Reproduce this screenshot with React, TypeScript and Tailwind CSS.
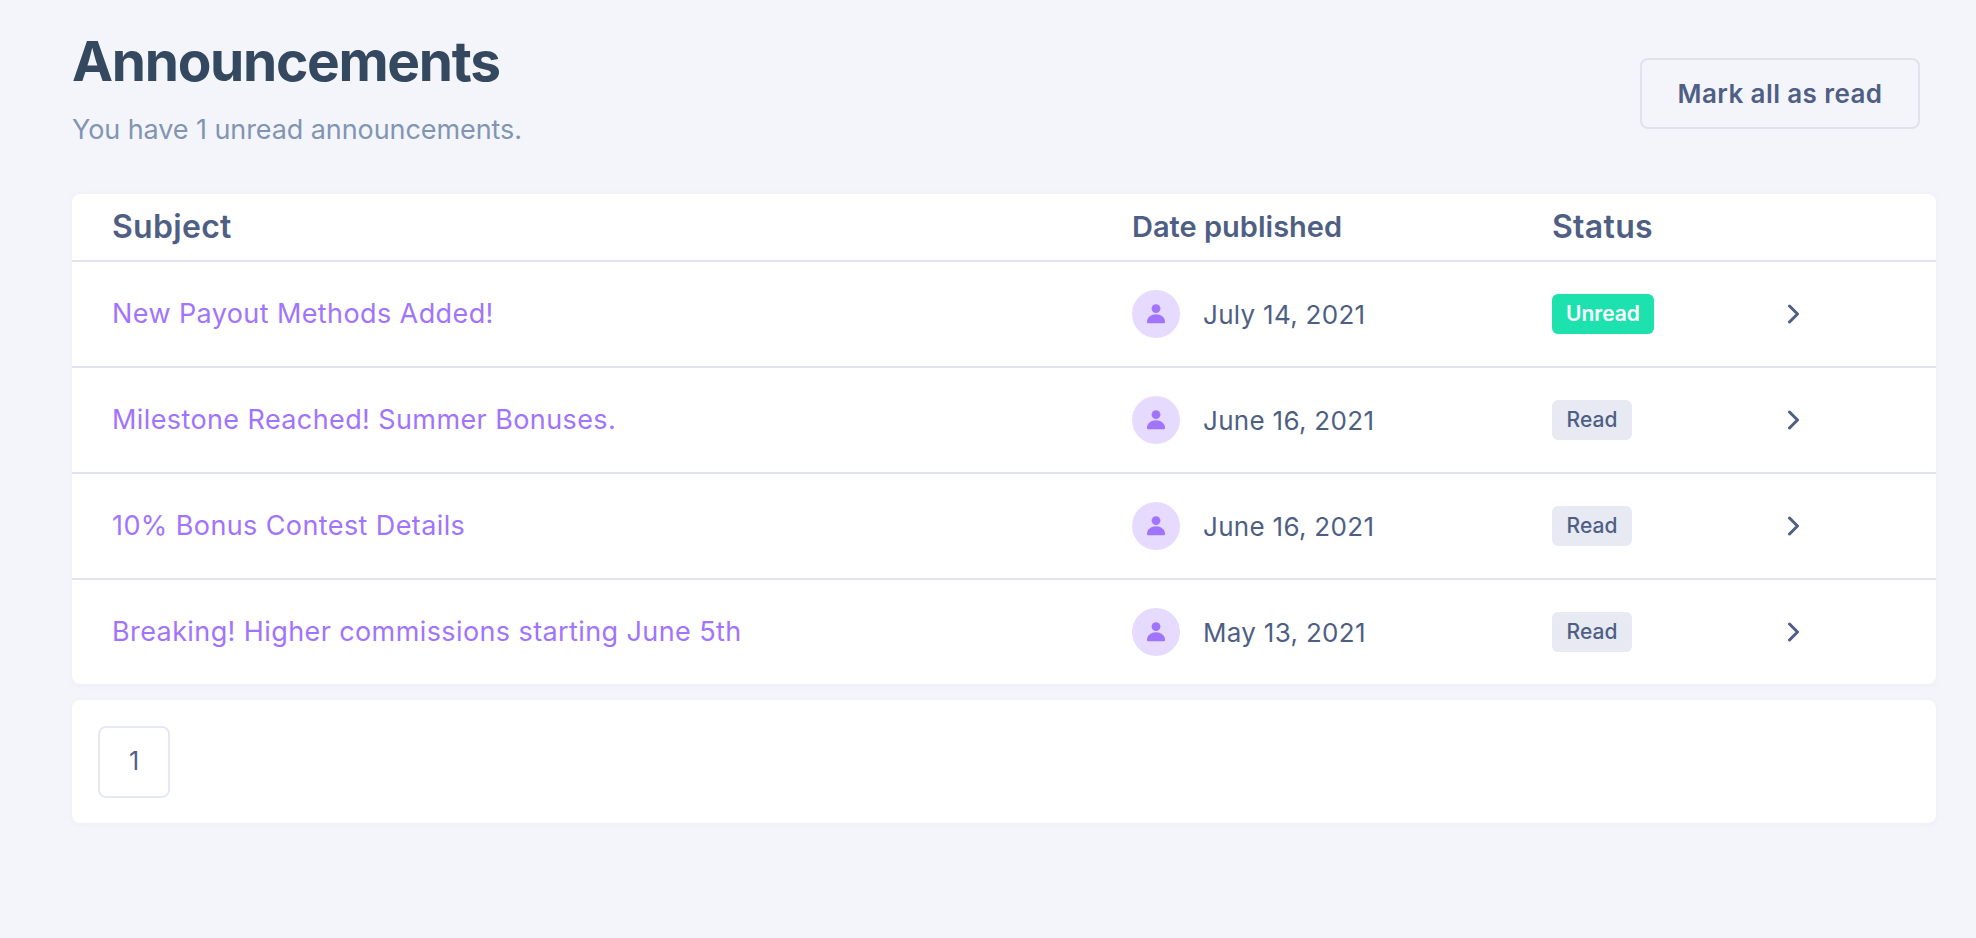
const rows = [
  { subject: "New Payout Methods Added!", date: "July 14, 2021", unread: true },
  { subject: "Milestone Reached! Summer Bonuses.", date: "June 16, 2021", unread: false },
  { subject: "10% Bonus Contest Details", date: "June 16, 2021", unread: false },
  { subject: "Breaking! Higher commissions starting June 5th", date: "May 13, 2021", unread: false },
];

const PersonIcon = () => (
  <svg width="20" height="20" viewBox="0 0 20 20" fill="#a074ff">
    <circle cx="10" cy="4.6" r="4.4" />
    <path d="M1 18c0-4.5 4-7.7 9-7.7s9 3.2 9 7.7c0 .8-.5 1.3-1.2 1.3H2.2C1.5 19.3 1 18.8 1 18z" />
  </svg>
);

const Chevron = () => (
  <svg width="13" height="20" viewBox="0 0 13 20" fill="none" stroke="#4f5f84" strokeWidth="3" strokeLinecap="round" strokeLinejoin="round">
    <path d="M2.5 2l8 8-8 8" />
  </svg>
);

const App = () => {
  return (
    <div className="min-h-[938px] bg-[#f4f5fa] pl-[72px] pr-[40px] font-['Inter',sans-serif]">
      <div className="flex justify-between items-start pr-[16px]">
        <div>
          <h1 className="text-[55px] leading-[64px] pt-[29px] font-bold tracking-[-1.3px] text-[#34495f]">Announcements</h1>
          <p className="mt-[20px] text-[27px] leading-[34px] tracking-[-0.08px] text-[#8195b2]">You have 1 unread announcements.</p>
        </div>
        <button className="mt-[58px] w-[280px] h-[71px] border-2 border-[#dfe3ee] rounded-lg text-[26px] tracking-[0.4px] font-semibold text-[#4f5f84]">
          Mark all as read
        </button>
      </div>

      <div className="mt-[47px] bg-white rounded-lg shadow-[0_1px_6px_rgba(80,90,140,0.05)]">
        <div className="grid grid-cols-[1020px_420px_1fr] pl-[40px] h-[68px] items-center border-b-2 border-[#dfe2ef] font-semibold text-[#4f5f84]">
          <div className="text-[32px] tracking-[0.3px]">Subject</div>
          <div className="text-[29px]">Date published</div>
          <div className="text-[32px] tracking-[0.3px]">Status</div>
        </div>
        {rows.map((row, i) => (
          <div
            key={i}
            className={`grid grid-cols-[1020px_420px_235px_1fr] pl-[40px] items-center ${i < rows.length - 1 ? "h-[106px] border-b-2 border-[#dfe2ef]" : "h-[104px]"}`}
          >
            <div className="text-[27px] tracking-[0.4px] text-[#a074ff]">{row.subject}</div>
            <div className="flex items-center gap-[23px]">
              <div className="w-[48px] h-[48px] rounded-full bg-[#e6dbff] flex items-center justify-center">
                <PersonIcon />
              </div>
              <span className="text-[26px] tracking-[0.3px] text-[#4f5f84]">{row.date}</span>
            </div>
            <div>
              {row.unread ? (
                <span className="inline-flex items-center justify-center w-[102px] h-[40px] rounded-md bg-[#1de2ad] text-white text-[21px] font-semibold">Unread</span>
              ) : (
                <span className="inline-flex items-center justify-center w-[80px] h-[40px] rounded-md bg-[#e7eaf3] text-[#4f5f84] text-[21px] font-medium">Read</span>
              )}
            </div>
            <Chevron />
          </div>
        ))}
      </div>

      <div className="mt-[16px] bg-white rounded-lg h-[123px] pl-[26px] pt-[26px] shadow-[0_1px_6px_rgba(80,90,140,0.05)]">
        <button className="w-[72px] h-[72px] border-2 border-[#e6e9f5] rounded-lg text-[25px] text-[#4f5f84]">1</button>
      </div>
    </div>
  );
};

export default App;
